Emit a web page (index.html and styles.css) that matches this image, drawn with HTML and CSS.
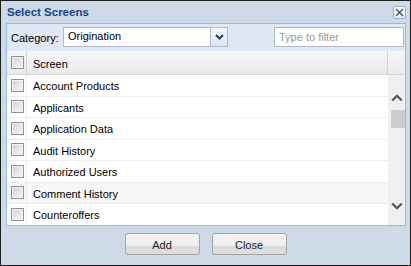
FILE: index.html
```html
<!DOCTYPE html>
<html lang="en">
<head>
    <meta charset="UTF-8">
    <title>Select Screens</title>
    <link rel="stylesheet" href="styles.css">
</head>
<body>
    <div class="window">
        <div class="titlebar">
            <span class="title">Select Screens</span>
            <span class="close-x">
                <svg width="11" height="11" viewBox="0 0 11 11"><path d="M2 2 L9 9 M9 2 L2 9" stroke="#2d4f86" stroke-width="1.3" fill="none"/></svg>
            </span>
        </div>

        <div class="panel">
            <div class="toolbar">
                <span class="label">Category:</span>
                <div class="combo">
                    <span class="combo-text">Origination</span>
                    <span class="trigger">
                        <svg width="9" height="6" viewBox="0 0 9 6"><path d="M1 1 L4.5 4.5 L8 1" stroke="#1c3f7a" stroke-width="2" fill="none"/></svg>
                    </span>
                </div>
                <input type="text" class="filter" placeholder="Type to filter">
            </div>

            <div class="grid-head">
                <div class="cell-check"><span class="check"></span></div>
                <div class="cell-name">Screen</div>
                <div class="cell-spacer"></div>
            </div>

            <div class="grid-body">
                <div class="rows">
                    <div class="row"><div class="cell-check"><span class="check"></span></div><div class="cell-name">Account Products</div></div>
                    <div class="row"><div class="cell-check"><span class="check"></span></div><div class="cell-name">Applicants</div></div>
                    <div class="row"><div class="cell-check"><span class="check"></span></div><div class="cell-name">Application Data</div></div>
                    <div class="row"><div class="cell-check"><span class="check"></span></div><div class="cell-name">Audit History</div></div>
                    <div class="row"><div class="cell-check"><span class="check"></span></div><div class="cell-name">Authorized Users</div></div>
                    <div class="row hover"><div class="cell-check"><span class="check"></span></div><div class="cell-name">Comment History</div></div>
                    <div class="row"><div class="cell-check"><span class="check"></span></div><div class="cell-name">Counteroffers</div></div>
                </div>
                <div class="scrollbar">
                    <span class="arrow">
                        <svg width="12" height="8" viewBox="0 0 12 8"><path d="M1.2 6.5 L6 1.7 L10.8 6.5" stroke="#555" stroke-width="2.2" fill="none"/></svg>
                    </span>
                    <span class="thumb"></span>
                    <span class="track"></span>
                    <span class="arrow">
                        <svg width="12" height="8" viewBox="0 0 12 8"><path d="M1.2 1.5 L6 6.3 L10.8 1.5" stroke="#555" stroke-width="2.2" fill="none"/></svg>
                    </span>
                </div>
            </div>
        </div>

        <div class="buttons">
            <button class="btn">Add</button>
            <button class="btn">Close</button>
        </div>
    </div>
</body>
</html>
```

FILE: styles.css
```css
body {
    margin: 0;
    padding: 0;
    font-family: "Liberation Sans", Arial, sans-serif;
    font-size: 11px;
    color: #000;
}

.window {
    width: 411px;
    height: 266px;
    box-sizing: border-box;
    border: 1px solid #1e1e1e;
    background: #cedae7;
}

.titlebar {
    height: 22px;
    display: flex;
    align-items: center;
    justify-content: space-between;
    padding: 0 4px 0 6px;
}

.title {
    font-weight: bold;
    font-size: 11.5px;
    color: #15428b;
}

.close-x {
    width: 11px;
    height: 11px;
    border: 1px solid #8eaed8;
    border-radius: 2px;
    background: linear-gradient(#ffffff, #e6eef8);
    display: flex;
}

.panel {
    margin: 0 4px 0 5px;
    height: 203px;
    box-sizing: border-box;
    border: 1px solid #99bbe8;
    background: #fff;
    display: flex;
    flex-direction: column;
}

.toolbar {
    height: 27px;
    box-sizing: border-box;
    padding: 3px 1px 0 4px;
    background: #dfe8f6;
    display: flex;
    align-items: flex-start;
}

.label {
    width: 52px;
    line-height: 20px;
    padding-top: 1px;
}

.combo {
    width: 165px;
    height: 20px;
    box-sizing: border-box;
    border: 1px solid #b5b8c8;
    background: #fff;
    display: flex;
}

.combo-text {
    flex: 1;
    padding-left: 4px;
    line-height: 17px;
}

.trigger {
    width: 16px;
    border-left: 1px solid #b5b8c8;
    background: linear-gradient(#f3f6fb, #dde6f2);
    display: flex;
    align-items: center;
    justify-content: center;
}

.filter {
    margin: 0 0 0 auto;
    width: 130px;
    height: 20px;
    box-sizing: border-box;
    border: 1px solid #b5b8c8;
    padding: 0 0 0 4px;
    font-family: "Liberation Sans", Arial, sans-serif;
    font-size: 11px;
    outline: none;
}

.filter::placeholder {
    color: #9a9a9a;
}

.grid-head {
    height: 24px;
    box-sizing: border-box;
    display: flex;
    background: linear-gradient(#f6f6f6, #ebebeb);
    border-bottom: 1px solid #d4d4d4;
}

.grid-head .cell-check {
    border-right: 1px solid #d2d2d2;
}

.grid-head .cell-name {
    flex: 1;
    border-right: 1px solid #d2d2d2;
}

.cell-spacer {
    width: 17px;
}

.cell-check {
    width: 20px;
    padding-left: 4px;
    box-sizing: border-box;
    display: flex;
    align-items: center;
}

.cell-name {
    padding: 2px 0 0 6px;
    display: flex;
    align-items: center;
}

.check {
    width: 13px;
    height: 13px;
    box-sizing: border-box;
    border: 1px solid #929292;
    background: linear-gradient(135deg, #d4d4d4, #f6f6f6);
    box-shadow: inset 0 0 0 1px #f2f2f2;
}

.grid-body {
    flex: 1;
    display: flex;
    overflow: hidden;
}

.rows {
    flex: 1;
}

.row {
    height: 21.5px;
    box-sizing: border-box;
    display: flex;
    border-bottom: 1px solid #ededed;
}

.row .cell-check {
    border-right: 1px solid #ededed;
}

.row.hover {
    background: #f7f7f7;
}

.scrollbar {
    width: 17px;
    background: #efefef;
    display: flex;
    flex-direction: column;
    align-items: center;
    padding: 19px 0 15px;
    box-sizing: border-box;
}

.arrow {
    height: 8px;
    display: flex;
}

.thumb {
    margin: 8px 0 0 3px;
    width: 14px;
    height: 18px;
    background: #cdcdcd;
}

.track {
    flex: 1;
}

.buttons {
    display: flex;
    justify-content: center;
    gap: 12px;
    padding-top: 7px;
}

.btn {
    width: 75px;
    height: 22px;
    border: 1px solid #a4a4a4;
    border-radius: 3px;
    background: linear-gradient(#f5f5f5 0, #eeeeee 58%, #dcdcdc 58%, #dedede 100%);
    font-family: "Liberation Sans", Arial, sans-serif;
    font-size: 11px;
    color: #222;
    padding: 2px 0 0;
}
```
